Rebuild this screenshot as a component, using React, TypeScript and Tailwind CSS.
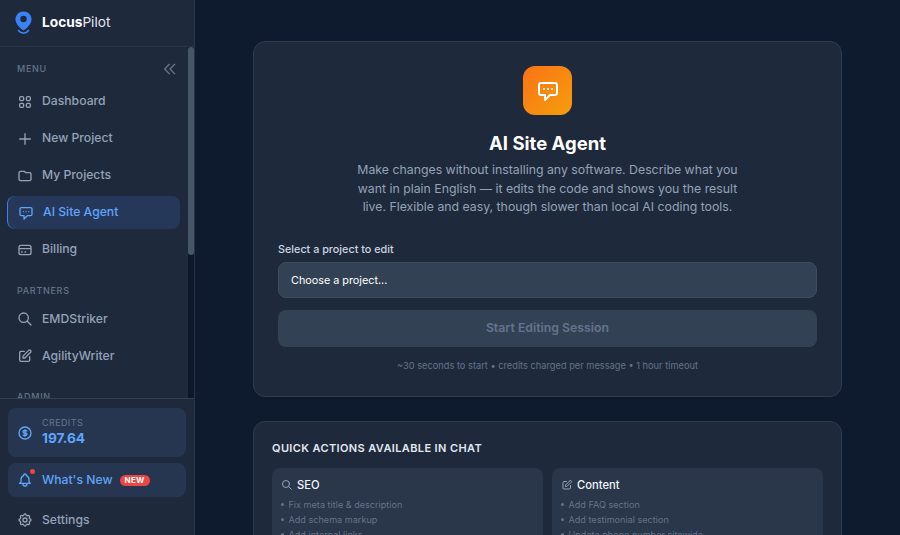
import React from "react";
import {
  HiOutlineViewGrid, HiOutlinePlus, HiOutlineFolder, HiOutlineChatAlt, HiOutlineCreditCard,
  HiOutlineSearch, HiOutlinePencilAlt, HiOutlineCurrencyDollar, HiOutlineBell, HiOutlineCog,
  HiOutlineChevronDoubleLeft,
} from "react-icons/hi";

function Item({ icon: Icon, label }: { icon: React.ComponentType<{ className?: string }>; label: string }) {
  return (
    <div className="mb-[4px] flex h-[33px] items-center gap-[9px] pl-[17px] text-[12.2px] font-medium text-[#94a3b8]">
      <Icon className="h-[16px] w-[16px] shrink-0 text-[#94a3b8]" />
      <span>{label}</span>
    </div>
  );
}

function Section({ children }: { children: React.ReactNode }) {
  return <div className="pl-[17px] text-[9px] font-medium tracking-[0.7px] text-[#64748b]">{children}</div>;
}

function Bullets({ items }: { items: string[] }) {
  return (
    <ul className="mt-[4px] flex flex-col gap-[1.500px] text-[9.100px] leading-[13.500px] text-[#64748b]">
      {items.map((t) => (
        <li key={t} className="flex items-center gap-[5px] whitespace-nowrap">
          <span className="h-[2.500px] w-[2.500px] rounded-full bg-[#64748b]" />
          {t}
        </li>
      ))}
    </ul>
  );
}

export default function App() {
  return (
    <div className="flex h-[535px] w-[900px] overflow-hidden bg-[#0e1a2e] font-['Inter',sans-serif]">
      <aside className="flex h-full w-[195px] shrink-0 flex-col border-r border-[#283548] bg-[#1e293b]">
        <div className="flex h-[47px] shrink-0 items-center gap-[10px] border-b border-[#283548] pb-[1px] pl-[15px]">
          <svg width="17" height="23" viewBox="0 0 17 23" className="shrink-0">
            <path d="M8.5 0.5C4 .5 .5 4 .5 8.2c0 4.600 4.600 9 8 11.300 3.400-2.300 8-6.700 8-11.300C16.500 4 13 .5 8.500 .5Z" fill="#3b82f6" />
            <circle cx="8.500" cy="8" r="3.200" fill="#1e293b" />
            <path d="M3.500 19.500c1.200 1.700 3 2.600 5 2.600s3.800-.9 5-2.600" stroke="#3b82f6" strokeWidth="1.600" fill="none" strokeLinecap="round" />
          </svg>
          <div className="text-[13.700px] text-[#e2e8f0]">
            <span className="font-bold text-white">Locus</span>Pilot
          </div>
        </div>
        <div className="flex min-h-0 flex-1">
          <nav className="min-w-0 flex-1 overflow-hidden pt-[14px]">
            <div className="mb-[8px] flex items-center justify-between pr-[10px]">
              <Section>MENU</Section>
              <HiOutlineChevronDoubleLeft className="h-[16px] w-[16px] text-[#64748b]" />
            </div>
            <Item icon={HiOutlineViewGrid} label="Dashboard" />
            <Item icon={HiOutlinePlus} label="New Project" />
            <Item icon={HiOutlineFolder} label="My Projects" />
            <div className="mb-[4px] ml-[7px] mr-[8px] flex h-[33px] items-center gap-[9px] rounded-lg border-l border-[#3b82f6] bg-[#26385a] pl-[10px] text-[12.200px] font-medium text-[#60a5fa]">
              <HiOutlineChatAlt className="h-[16px] w-[16px] shrink-0" />
              <span>AI Site Agent</span>
            </div>
            <Item icon={HiOutlineCreditCard} label="Billing" />
            <div className="mb-[5px] mt-[18px]">
              <Section>PARTNERS</Section>
            </div>
            <Item icon={HiOutlineSearch} label="EMDStriker" />
            <Item icon={HiOutlinePencilAlt} label="AgilityWriter" />
            <div className="mt-[17px]">
              <Section>ADMIN</Section>
            </div>
          </nav>
          <div className="w-[6px] shrink-0 bg-[#0f172a]">
            <div className="h-[208px] w-[6px] rounded-full bg-[#475569]" />
          </div>
        </div>
        <div className="flex h-[137px] shrink-0 flex-col border-t border-[#334155] bg-[#1e293b] px-[8px] pt-[9px]">
          <div className="flex h-[49px] items-center gap-[9px] rounded-lg bg-[#263650] pl-[9px]">
            <HiOutlineCurrencyDollar className="h-[16px] w-[16px] text-[#60a5fa]" />
            <div>
              <div className="text-[9px] leading-[12px] tracking-[0.4px] text-[#64748b]">CREDITS</div>
              <div className="text-[13.700px] leading-[19px] font-bold text-[#60a5fa]">197.64</div>
            </div>
          </div>
          <div className="mt-[6px] flex h-[34px] items-center gap-[9px] rounded-lg bg-[#263650] pl-[9px]">
            <div className="relative">
              <HiOutlineBell className="h-[16px] w-[16px] text-[#60a5fa]" />
              <span className="absolute right-[-2px] top-[-3px] h-[5px] w-[5px] rounded-full bg-[#ef4444]" />
            </div>
            <span className="text-[12.200px] font-medium text-[#60a5fa]">What's New</span>
            <span className="-ml-[2px] rounded-full bg-[#ef4444] px-[5px] text-[8px] font-bold leading-[11px] tracking-[0.3px] text-white">NEW</span>
          </div>
          <div className="flex flex-1 items-center gap-[9px] pl-[9px] pt-[8px] text-[12.200px] font-medium text-[#94a3b8]">
            <HiOutlineCog className="h-[16px] w-[16px]" />
            Settings
          </div>
        </div>
      </aside>
      <main className="min-w-0 flex-1 overflow-hidden bg-[#0e1a2e] pt-[41px]">
        <div className="mx-auto w-[589px]">
          <section className="h-[356px] rounded-[12px] border border-[#2e3b50] bg-[#1e293b] px-[24px] pt-[24px]">
            <div className="flex flex-col items-center">
              <div className="flex h-[49px] w-[49px] items-center justify-center rounded-[12px] bg-[linear-gradient(135deg,#f97316,#f59e0b)]">
                <HiOutlineChatAlt className="h-[24px] w-[24px] text-white" />
              </div>
              <h1 className="mt-[14px] text-[18.500px] leading-[28px] font-bold text-white">AI Site Agent</h1>
              <p className="mt-[4px] w-[392px] text-center text-[12.300px] leading-[18.500px] text-[#94a3b8]">
                Make changes without installing any software. Describe what you want in plain English — it edits the code and shows you the result live. Flexible and easy, though slower than local AI coding tools.
              </p>
            </div>
            <div className="mt-[25px] text-[10.800px] leading-[16px] font-medium text-[#cbd5e1]">Select a project to edit</div>
            <div className="mt-[4px] flex h-[36px] items-center rounded-lg border border-[#3e4c62] bg-[#334155] pl-[12px] pt-[3px] text-[10.800px] text-white">Choose a project...</div>
            <div className="mt-[12px] flex h-[37px] items-center justify-center rounded-lg bg-[#334155] text-[12.300px] font-semibold text-[#64748b]">Start Editing Session</div>
            <div className="mt-[12px] text-center text-[9.250px] text-[#64748b]">~30 seconds to start • credits charged per message • 1 hour timeout</div>
          </section>
          <section className="mt-[24px] h-[200px] rounded-[12px] border border-[#2e3b50] bg-[#1e293b] px-[18px] pt-[18px]">
            <h2 className="text-[11px] leading-[16px] font-semibold tracking-[0.380px] text-[#e2e8f0]">QUICK ACTIONS AVAILABLE IN CHAT</h2>
            <div className="mt-[12px] grid grid-cols-2 gap-[9px]">
              <div className="h-[120px] rounded-lg bg-[#2a3649] px-[9px] pt-[9px]">
                <div className="flex items-center gap-[4px] text-[11.200px] font-medium text-[#f1f5f9]">
                  <HiOutlineSearch className="h-[12px] w-[12px] text-[#94a3b8]" />SEO
                </div>
                <Bullets items={["Fix meta title & description", "Add schema markup", "Add internal links"]} />
              </div>
              <div className="h-[120px] rounded-lg bg-[#2a3649] px-[9px] pt-[9px]">
                <div className="flex items-center gap-[4px] text-[11.200px] font-medium text-[#f1f5f9]">
                  <HiOutlinePencilAlt className="h-[12px] w-[12px] text-[#94a3b8]" />Content
                </div>
                <Bullets items={["Add FAQ section", "Add testimonial section", "Update phone number sitewide"]} />
              </div>
            </div>
          </section>
        </div>
      </main>
    </div>
  );
}
